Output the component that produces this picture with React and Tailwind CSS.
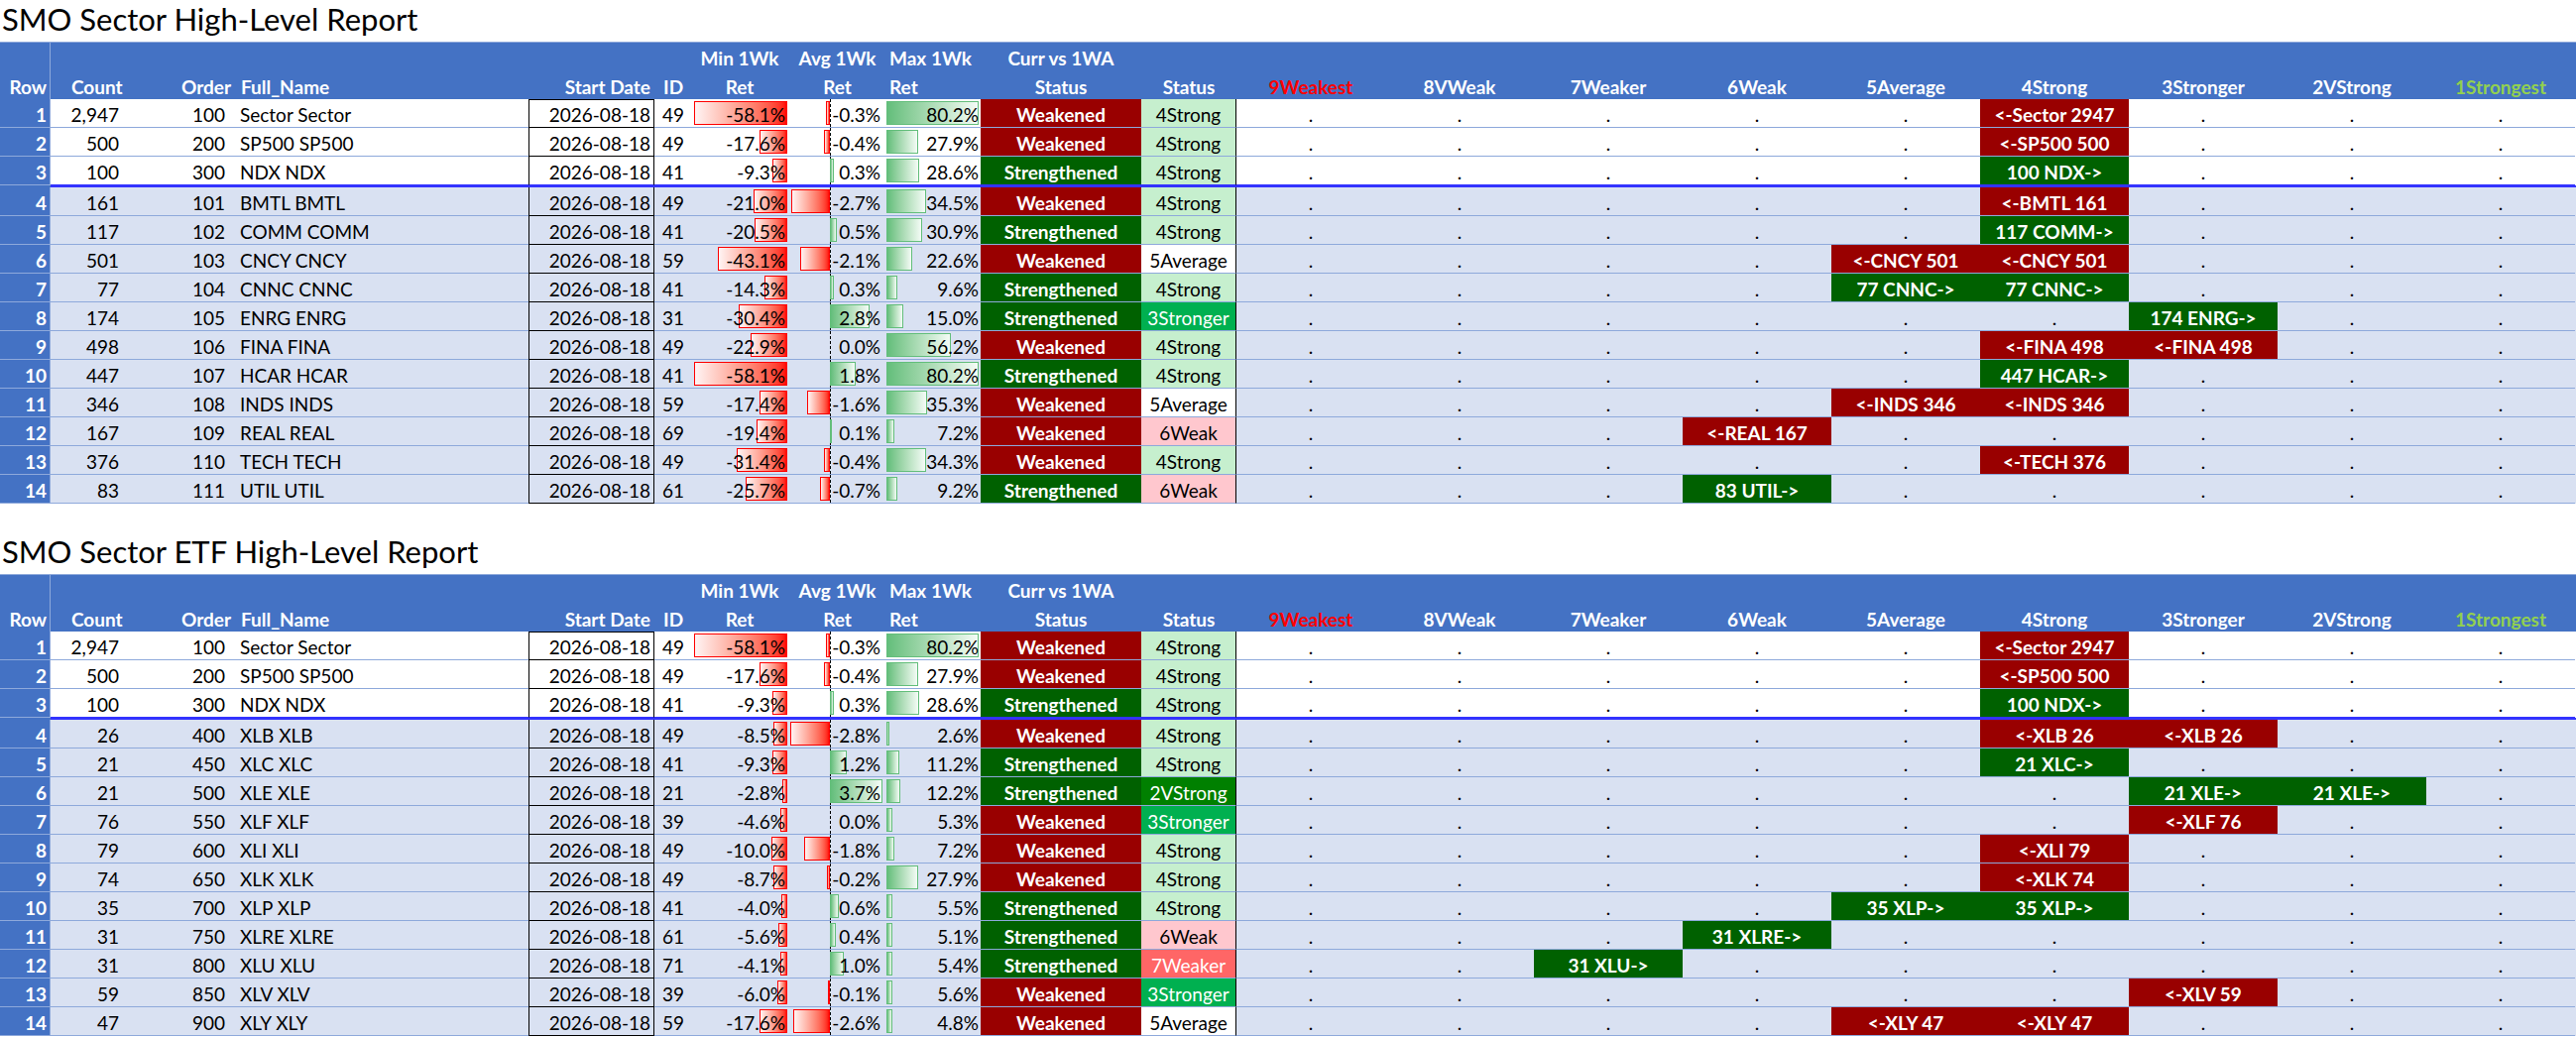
const GRID =
  "grid grid-cols-[51px_80px_105px_297px_127px_36px_100px_97px_96px_162px_96px_repeat(9,150px)]";

const LEVELS = ["9Weakest", "8VWeak", "7Weaker", "6Weak", "5Average", "4Strong", "3Stronger", "2VStrong", "1Strongest"];

const TOP = [
  ["2,947", 100, "Sector Sector", 49, -58.1, -0.3, 80.2, "W", "4Strong", { 5: ["r", "<-Sector 2947"] }],
  ["500", 200, "SP500 SP500", 49, -17.6, -0.4, 27.9, "W", "4Strong", { 5: ["r", "<-SP500 500"] }],
  ["100", 300, "NDX NDX", 41, -9.3, 0.3, 28.6, "S", "4Strong", { 5: ["g", "100 NDX->"] }],
];

const SECTORS = [
  ...TOP,
  ["161", 101, "BMTL BMTL", 49, -21.0, -2.7, 34.5, "W", "4Strong", { 5: ["r", "<-BMTL 161"] }],
  ["117", 102, "COMM COMM", 41, -20.5, 0.5, 30.9, "S", "4Strong", { 5: ["g", "117 COMM->"] }],
  ["501", 103, "CNCY CNCY", 59, -43.1, -2.1, 22.6, "W", "5Average", { 4: ["r", "<-CNCY 501"], 5: ["r", "<-CNCY 501"] }],
  ["77", 104, "CNNC CNNC", 41, -14.3, 0.3, 9.6, "S", "4Strong", { 4: ["g", "77 CNNC->"], 5: ["g", "77 CNNC->"] }],
  ["174", 105, "ENRG ENRG", 31, -30.4, 2.8, 15.0, "S", "3Stronger", { 6: ["g", "174 ENRG->"] }],
  ["498", 106, "FINA FINA", 49, -22.9, 0.0, 56.2, "W", "4Strong", { 5: ["r", "<-FINA 498"], 6: ["r", "<-FINA 498"] }],
  ["447", 107, "HCAR HCAR", 41, -58.1, 1.8, 80.2, "S", "4Strong", { 5: ["g", "447 HCAR->"] }],
  ["346", 108, "INDS INDS", 59, -17.4, -1.6, 35.3, "W", "5Average", { 4: ["r", "<-INDS 346"], 5: ["r", "<-INDS 346"] }],
  ["167", 109, "REAL REAL", 69, -19.4, 0.1, 7.2, "W", "6Weak", { 3: ["r", "<-REAL 167"] }],
  ["376", 110, "TECH TECH", 49, -31.4, -0.4, 34.3, "W", "4Strong", { 5: ["r", "<-TECH 376"] }],
  ["83", 111, "UTIL UTIL", 61, -25.7, -0.7, 9.2, "S", "6Weak", { 3: ["g", "83 UTIL->"] }],
];

const ETFS = [
  ...TOP,
  ["26", 400, "XLB XLB", 49, -8.5, -2.8, 2.6, "W", "4Strong", { 5: ["r", "<-XLB 26"], 6: ["r", "<-XLB 26"] }],
  ["21", 450, "XLC XLC", 41, -9.3, 1.2, 11.2, "S", "4Strong", { 5: ["g", "21 XLC->"] }],
  ["21", 500, "XLE XLE", 21, -2.8, 3.7, 12.2, "S", "2VStrong", { 6: ["g", "21 XLE->"], 7: ["g", "21 XLE->"] }],
  ["76", 550, "XLF XLF", 39, -4.6, 0.0, 5.3, "W", "3Stronger", { 6: ["r", "<-XLF 76"] }],
  ["79", 600, "XLI XLI", 49, -10.0, -1.8, 7.2, "W", "4Strong", { 5: ["r", "<-XLI 79"] }],
  ["74", 650, "XLK XLK", 49, -8.7, -0.2, 27.9, "W", "4Strong", { 5: ["r", "<-XLK 74"] }],
  ["35", 700, "XLP XLP", 41, -4.0, 0.6, 5.5, "S", "4Strong", { 4: ["g", "35 XLP->"], 5: ["g", "35 XLP->"] }],
  ["31", 750, "XLRE XLRE", 61, -5.6, 0.4, 5.1, "S", "6Weak", { 3: ["g", "31 XLRE->"] }],
  ["31", 800, "XLU XLU", 71, -4.1, 1.0, 5.4, "S", "7Weaker", { 2: ["g", "31 XLU->"] }],
  ["59", 850, "XLV XLV", 39, -6.0, -0.1, 5.6, "W", "3Stronger", { 6: ["r", "<-XLV 59"] }],
  ["47", 900, "XLY XLY", 59, -17.6, -2.6, 4.8, "W", "5Average", { 4: ["r", "<-XLY 47"], 5: ["r", "<-XLY 47"] }],
];

const LEVEL_STYLE = {
  "4Strong": "bg-[#C6EFCE] text-black",
  "5Average": "bg-white text-black",
  "3Stronger": "bg-[#00B050] text-white",
  "6Weak": "bg-[#FFC7CE] text-black",
  "2VStrong": "bg-[#008000] text-white",
  "7Weaker": "bg-[#FF6666] text-white",
};

const HEAD = [
  { l2: "Row", cls: "justify-end pr-[3px]" },
  { l2: "Count", cls: "justify-start pl-[21px]" },
  { l2: "Order", cls: "justify-end pr-[3px]" },
  { l2: "Full_Name", cls: "justify-start pl-[7px]" },
  { l2: "Start Date", cls: "justify-end pr-[4px]" },
  { l2: "ID", cls: "justify-start pl-[9px]" },
  { l1: "Min 1Wk", l2: "Ret", cls: "justify-center" },
  { l1: "Avg 1Wk", l2: "Ret", cls: "justify-center" },
  { l1: "Max 1Wk", l2: "Ret", cls: "justify-start pl-[4px]" },
  { l1: "Curr vs 1WA", l2: "Status", cls: "justify-center" },
  { l2: "Status", cls: "justify-center" },
];

const pct = (v) => v.toFixed(1) + "%";

function Header() {
  return (
    <div className={`${GRID} h-[58px] bg-[#4472C4] text-white font-bold border-t border-[#8EA9DB]`}>
      {HEAD.map((h, i) => (
        <div key={i} className={`flex flex-col ${i === 0 ? "border-r border-[#8EA9DB]" : ""}`}>
          <div className={`flex h-[28px] items-end pb-[1px] ${h.cls}`}>{h.l1 || ""}</div>
          <div className={`flex h-[29px] items-end pb-[1px] ${h.cls}`}>{h.l2}</div>
        </div>
      ))}
      {LEVELS.map((l, i) => (
        <div
          key={l}
          className={`flex items-end justify-center pb-[1px] ${
            i === 0 ? "text-[#FF0000]" : i === 8 ? "text-[#92D050]" : "text-white"
          }`}
        >
          {l}
        </div>
      ))}
    </div>
  );
}

function DataRow({ r, i }) {
  const [count, order, name, id, min, avg, max, status, level, boxes] = r;
  const line = i === 2 ? "border-b border-[#3333FF]" : "border-b border-[#8EA9DB]";
  const bg = i < 3 ? "bg-white" : "bg-[#D9E1F2]";
  const cell = `flex items-end pb-[1px] ${line}`;
  const dateBorder =
    i === 2
      ? "border-x border-b border-x-black border-b-[#3333FF]"
      : i === 0
      ? "border border-black"
      : "border-x border-b border-black";

  return (
    <div className={`${GRID} h-[29px] ${bg}`}>
      <div className="flex items-end justify-end pr-[3px] pb-[1px] bg-[#4472C4] text-white font-bold border-r border-b border-[#8EA9DB]">
        {i + 1}
      </div>
      <div className={`${cell} justify-end pr-[11px]`}>{count}</div>
      <div className={`${cell} justify-end pr-[9px]`}>{order}</div>
      <div className={`${cell} pl-[6px]`}>{name}</div>
      <div className={`flex items-end justify-end pr-[3px] pb-[1px] ${dateBorder}`}>2026-08-18</div>
      <div className={`${cell} pl-[8px]`}>{id}</div>

      <div className={`${cell} relative justify-end pr-[4px]`}>
        <div
          className="absolute right-[2px] top-[2px] bottom-[2px] border border-[#FF0000] bg-linear-to-r from-[#FFF4F4] to-[#FF0000]"
          style={{ width: Math.max(2, (Math.abs(min) / 58.1) * 94) }}
        />
        <span className="relative">{pct(min)}</span>
      </div>

      <div className={`${cell} relative justify-end pr-[5px]`}>
        <div className="absolute left-[41px] top-0 bottom-0 border-l border-dashed border-black" />
        {avg < 0 && (
          <div
            className="absolute right-[56px] top-[2px] bottom-[2px] border border-[#FF0000] bg-linear-to-r from-[#FFF4F4] to-[#FF0000]"
            style={{ width: Math.max(2, (Math.abs(avg) / 2.8) * 40) }}
          />
        )}
        {avg > 0 && (
          <div
            className="absolute left-[41px] top-[2px] bottom-[2px] border border-[#63BE7B] bg-linear-to-r from-[#63BE7B] to-[#F4FBF6]"
            style={{ width: Math.max(2, (avg / 3.7) * 53) }}
          />
        )}
        <span className="relative">{pct(avg)}</span>
      </div>

      <div className={`${cell} relative justify-end pr-[2px]`}>
        <div
          className="absolute left-[1px] top-[2px] bottom-[2px] border border-[#63BE7B] bg-linear-to-r from-[#63BE7B] to-[#F4FBF6]"
          style={{ width: Math.max(2, (max / 80.2) * 93) }}
        />
        <span className="relative">{pct(max)}</span>
      </div>

      <div
        className={`${cell} justify-center text-white font-bold ${
          status === "W" ? "bg-[#990000]" : "bg-[#006100]"
        }`}
      >
        {status === "W" ? "Weakened" : "Strengthened"}
      </div>
      <div className={`${cell} justify-center border-r border-r-black ${LEVEL_STYLE[level]}`}>{level}</div>

      {LEVELS.map((l, k) =>
        boxes[k] ? (
          <div
            key={l}
            className={`${cell} justify-center text-white font-bold ${
              boxes[k][0] === "r" ? "bg-[#990000]" : "bg-[#006100]"
            }`}
          >
            {boxes[k][1]}
          </div>
        ) : (
          <div key={l} className={`${cell} justify-center`}>
            .
          </div>
        )
      )}
    </div>
  );
}

function Report({ title, rows, first }) {
  return (
    <div>
      <div
        className={`flex items-end pl-[2px] pb-[7px] text-[31px] leading-none ${
          first ? "h-[42px]" : "h-[71px]"
        }`}
      >
        {title}
      </div>
      <Header />
      {rows.map((r, i) => (
        <div key={i}>
          <DataRow r={r} i={i} />
          {i === 2 && (
            <div className="flex h-[2px]">
              <div className="w-[51px] bg-[#4472C4]" />
              <div className="flex-1 bg-[#3333FF]" />
            </div>
          )}
        </div>
      ))}
    </div>
  );
}

export default function App() {
  return (
    <div className="w-[2598px] h-[1046px] overflow-hidden bg-white text-black text-[19px] leading-[22px] font-['Lato',sans-serif]">
      <Report title="SMO Sector High-Level Report" rows={SECTORS} first />
      <Report title="SMO Sector ETF High-Level Report" rows={ETFS} />
    </div>
  );
}
